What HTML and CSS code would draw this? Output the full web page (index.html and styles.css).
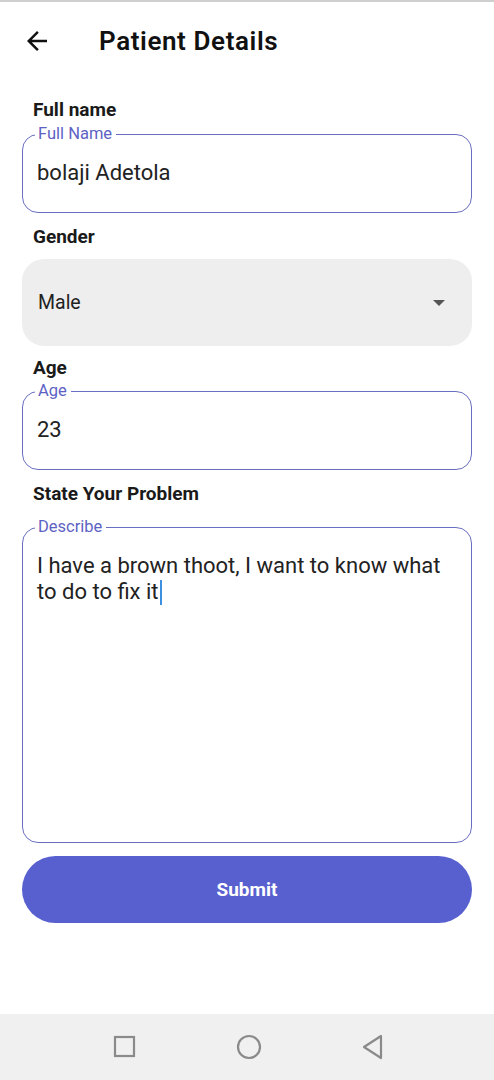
FILE: index.html
```html
<!DOCTYPE html>
<html>
<head>
<meta charset="utf-8">
<link rel="stylesheet" href="styles.css">
</head>
<body>
<div class="screen">
  <header class="header">
    <svg class="back" viewBox="0 0 24 24" width="30" height="30"><path d="M20 11H7.83l5.59-5.59L12 4l-8 8 8 8 1.41-1.41L7.83 13H20v-2z" fill="#111"/></svg>
    <h1 class="title">Patient Details</h1>
  </header>
  <main class="form">
    <div class="label label-first">Full name</div>
    <fieldset class="field">
      <legend class="legend">Full Name</legend>
      <div class="value">bolaji Adetola</div>
    </fieldset>

    <div class="label">Gender</div>
    <div class="select">
      <span class="select-text">Male</span>
      <span class="caret"></span>
    </div>

    <div class="label label-age">Age</div>
    <fieldset class="field field-age">
      <legend class="legend">Age</legend>
      <div class="value">23</div>
    </fieldset>

    <div class="label">State Your Problem</div>
    <fieldset class="field field-area">
      <legend class="legend">Describe</legend>
      <div class="area-text">I have a brown thoot, I want to know what to do to fix it<span class="cursor"></span></div>
    </fieldset>

    <button class="submit">Submit</button>
  </main>
  <nav class="navbar">
    <svg width="24" height="24" viewBox="0 0 24 24"><rect x="2" y="2" width="19" height="19" fill="none" stroke="#8a8a8a" stroke-width="2.2"/></svg>
    <svg width="26" height="26" viewBox="0 0 26 26"><circle cx="13" cy="13" r="11" fill="none" stroke="#8a8a8a" stroke-width="2.2"/></svg>
    <svg width="24" height="26" viewBox="0 0 24 26"><path d="M20 2 L3 13 L20 24 Z" fill="none" stroke="#8a8a8a" stroke-width="2.2" stroke-linejoin="round"/></svg>
  </nav>
</div>
</body>
</html>
```

FILE: styles.css
```css
* { box-sizing: border-box; }
html, body { margin: 0; padding: 0; background: #fff; }
body { font-family: Roboto, "Noto Sans", "Liberation Sans", sans-serif; color: #1c1c1c; }

.screen {
  width: 494px;
  min-height: 1080px;
  display: flex;
  flex-direction: column;
  border-top: 2px solid #cfcfcf;
}

.header {
  height: 78px;
  display: flex;
  align-items: center;
  padding-left: 22px;
}
.back { display: block; }
.title {
  margin: 0 0 0 47px;
  font-size: 26px;
  font-weight: 600;
  letter-spacing: 0.6px;
  color: #111;
}

.form {
  padding: 0 22px;
  display: flex;
  flex-direction: column;
}

.label {
  font-size: 19px;
  font-weight: 700;
  line-height: 20px;
  color: #1a1a1a;
  padding-left: 11px;
  margin-top: 14px;
  margin-bottom: 6px;
}
.label-first { margin-top: 20px; }
.label-age { margin-top: 12px; margin-bottom: 5px; }

.field {
  margin: 0;
  border: 1.6px solid #6a6ec0;
  border-radius: 16px;
  padding: 0 14px 8px 12px;
  min-width: 0;
}
.legend {
  font-size: 16.5px;
  line-height: 16px;
  color: #5d62c4;
  padding: 0 4px 0 3px;
}
.value {
  height: 62px;
  line-height: 62px;
  font-size: 22px;
  color: #222;
  padding-left: 2px;
}

.select {
  margin-top: 6px;
  height: 87px;
  background: #eeeeee;
  border-radius: 22px;
  display: flex;
  align-items: center;
  justify-content: space-between;
  padding: 0 27px 0 16px;
}
.select-text { font-size: 19.5px; color: #222; }
.caret {
  width: 0; height: 0;
  border-left: 6px solid transparent;
  border-right: 6px solid transparent;
  border-top: 6px solid #555;
}

.field-area {
  margin-top: 9px;
  padding-top: 0;
}
.area-text {
  min-height: 299px;
  padding: 18px 10px 0 2px;
  font-size: 22px;
  line-height: 26px;
  color: #222;
}
.cursor {
  display: inline-block;
  width: 2px;
  height: 25px;
  background: #3d8fe0;
  vertical-align: -6px;
  margin-left: 1px;
}

.submit {
  margin-top: 13px;
  height: 67px;
  border: none;
  border-radius: 34px;
  background: #5860d0;
  color: #fff;
  font-family: Roboto, "Noto Sans", sans-serif;
  font-size: 19px;
  font-weight: 700;
}

.navbar {
  margin-top: auto;
  height: 66px;
  background: #f0f0f0;
  display: flex;
  align-items: center;
  justify-content: center;
  gap: 99px;
  padding-left: 4px;
}
.navbar svg { display: block; }
```
